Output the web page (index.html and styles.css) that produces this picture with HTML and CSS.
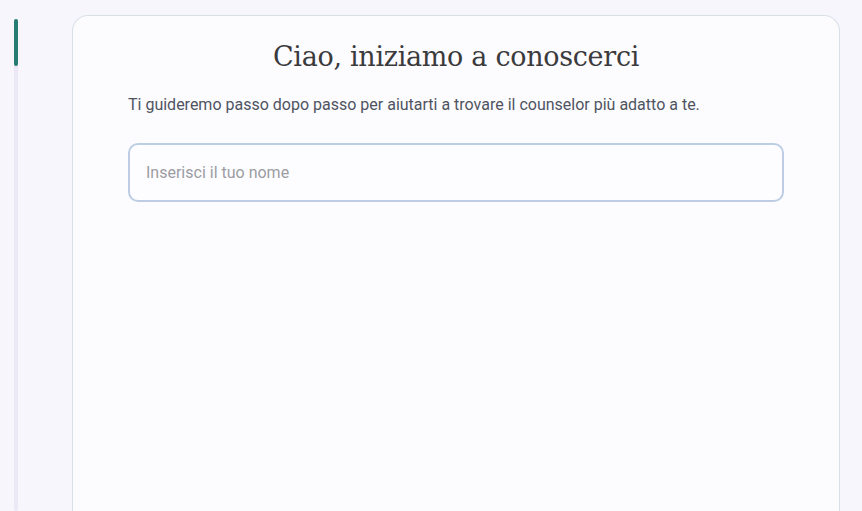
FILE: index.html
```html
<!DOCTYPE html>
<html lang="it">
  <head>
    <meta name="viewport" content="width=device-width, initial-scale=1.0" />
    <title>Trova il tuo counselor</title>
    <link rel="stylesheet" href="styles.css">
  </head>
  <body>
    <div class="layout">
      <!-- step progress on the left -->
      <aside class="progress">
        <div class="progress-track">
          <div class="progress-fill"></div>
        </div>
      </aside>

      <main class="card">
        <h1 class="card-title">Ciao, iniziamo a conoscerci</h1>
        <p class="card-intro">
          Ti guideremo passo dopo passo per aiutarti a trovare il counselor più adatto a te.
        </p>
        <input class="name-input" type="text" placeholder="Inserisci il tuo nome" />
      </main>
    </div>
  </body>
</html>
```

FILE: styles.css
```css
html,
body {
  margin: 0;
  height: 100%;
  background: #f8f6fd;
  font-family: Roboto, "Liberation Sans", sans-serif;
  overflow: hidden;
}

.layout {
  display: flex;
  height: 100%;
  padding: 15px 22px 0 14px;
  box-sizing: border-box;
}

.progress {
  width: 58px;
  flex-shrink: 0;
  padding-top: 4px;
}

.progress-track {
  width: 4px;
  height: 100%;
  background: #ece8f6;
  border-radius: 2px;
}

.progress-fill {
  height: 47px;
  background: #267b72;
  border-radius: 2px;
}

.card {
  flex: 1;
  background: #fcfbfe;
  border: 1px solid #d6e0e6;
  border-bottom: 0;
  border-radius: 16px 16px 0 0;
  padding: 0 55px;
  min-height: 600px;
}

.card-title {
  font-family: "DejaVu Serif", "Liberation Serif", serif;
  font-weight: normal;
  font-size: 27px;
  color: #3b3a3d;
  text-align: center;
  margin: 25px 0 0;
  letter-spacing: -0.3px;
}

.card-intro {
  font-size: 16px;
  color: #4f5462;
  margin: 23px 0 29px;
}

.name-input {
  display: block;
  width: 100%;
  box-sizing: border-box;
  height: 59px;
  padding: 0 16px;
  border: 2px solid #bccde4;
  border-radius: 10px;
  background: #fdfdff;
  font-family: inherit;
  font-size: 16px;
  color: #3b3a3d;
  outline: none;
}

.name-input::placeholder {
  color: #9c9ca3;
}
```
